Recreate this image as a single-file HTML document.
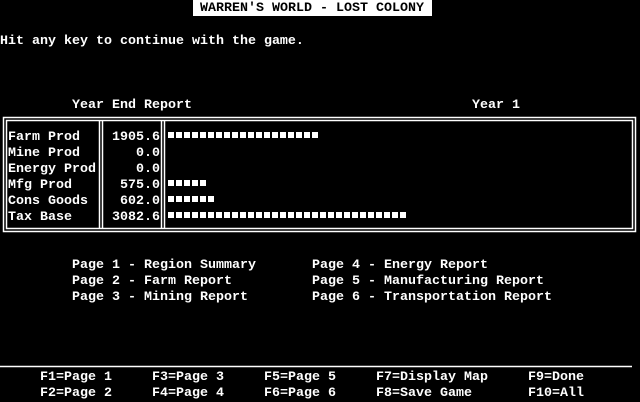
<!DOCTYPE html>
<html><head><style>
body{margin:0;background:#000;width:640px;height:400px;overflow:hidden;position:relative;font-family:"Liberation Mono",monospace;font-weight:bold;font-size:13.33px;color:#fff}
.t{position:absolute;white-space:pre;line-height:16px;height:16px;margin-top:2px}
.b{position:absolute;background:#fff}
.bar{position:absolute;left:168px;height:6px;background:repeating-linear-gradient(90deg,#fff 0 6px,transparent 6px 8px)}
</style></head><body>
<div class="b" style="left:193px;top:0;width:239px;height:16px"></div>
<div class="t" style="left:200px;top:-1px;color:#000">WARREN'S WORLD - LOST COLONY</div>
<div class="t" style="left:0;top:32px">Hit any key to continue with the game.</div>
<div class="t" style="left:72px;top:96px">Year End Report</div>
<div class="t" style="left:472px;top:96px">Year 1</div>
<svg style="position:absolute;left:0;top:0" width="640" height="400">
<g fill="none" stroke="#fff" stroke-width="1.5">
<rect x="3.5" y="117.5" width="632" height="114"/>
<rect x="6.5" y="120.5" width="626" height="108"/>
<line x1="99.5" y1="120" x2="99.5" y2="229"/>
<line x1="102.5" y1="120" x2="102.5" y2="229"/>
<line x1="161.5" y1="120" x2="161.5" y2="229"/>
<line x1="164.5" y1="120" x2="164.5" y2="229"/>
<line x1="0" y1="366.5" x2="632" y2="366.5"/>
</g></svg>
<div class="t" style="left:8px;top:128px">Farm Prod</div>
<div class="t" style="left:8px;top:144px">Mine Prod</div>
<div class="t" style="left:8px;top:160px">Energy Prod</div>
<div class="t" style="left:8px;top:176px">Mfg Prod</div>
<div class="t" style="left:8px;top:192px">Cons Goods</div>
<div class="t" style="left:8px;top:208px">Tax Base</div>
<div class="t" style="left:112px;top:128px">1905.6</div>
<div class="t" style="left:112px;top:144px">   0.0</div>
<div class="t" style="left:112px;top:160px">   0.0</div>
<div class="t" style="left:112px;top:176px"> 575.0</div>
<div class="t" style="left:112px;top:192px"> 602.0</div>
<div class="t" style="left:112px;top:208px">3082.6</div>
<div class="bar" style="top:132px;width:150px"></div>
<div class="bar" style="top:180px;width:38px"></div>
<div class="bar" style="top:196px;width:46px"></div>
<div class="bar" style="top:212px;width:238px"></div>
<div class="t" style="left:72px;top:256px">Page 1 - Region Summary</div>
<div class="t" style="left:72px;top:272px">Page 2 - Farm Report</div>
<div class="t" style="left:72px;top:288px">Page 3 - Mining Report</div>
<div class="t" style="left:312px;top:256px">Page 4 - Energy Report</div>
<div class="t" style="left:312px;top:272px">Page 5 - Manufacturing Report</div>
<div class="t" style="left:312px;top:288px">Page 6 - Transportation Report</div>
<div class="t" style="left:40px;top:368px">F1=Page 1</div>
<div class="t" style="left:40px;top:384px">F2=Page 2</div>
<div class="t" style="left:152px;top:368px">F3=Page 3</div>
<div class="t" style="left:152px;top:384px">F4=Page 4</div>
<div class="t" style="left:264px;top:368px">F5=Page 5</div>
<div class="t" style="left:264px;top:384px">F6=Page 6</div>
<div class="t" style="left:376px;top:368px">F7=Display Map</div>
<div class="t" style="left:376px;top:384px">F8=Save Game</div>
<div class="t" style="left:528px;top:368px">F9=Done</div>
<div class="t" style="left:528px;top:384px">F10=All</div>
</body></html>
